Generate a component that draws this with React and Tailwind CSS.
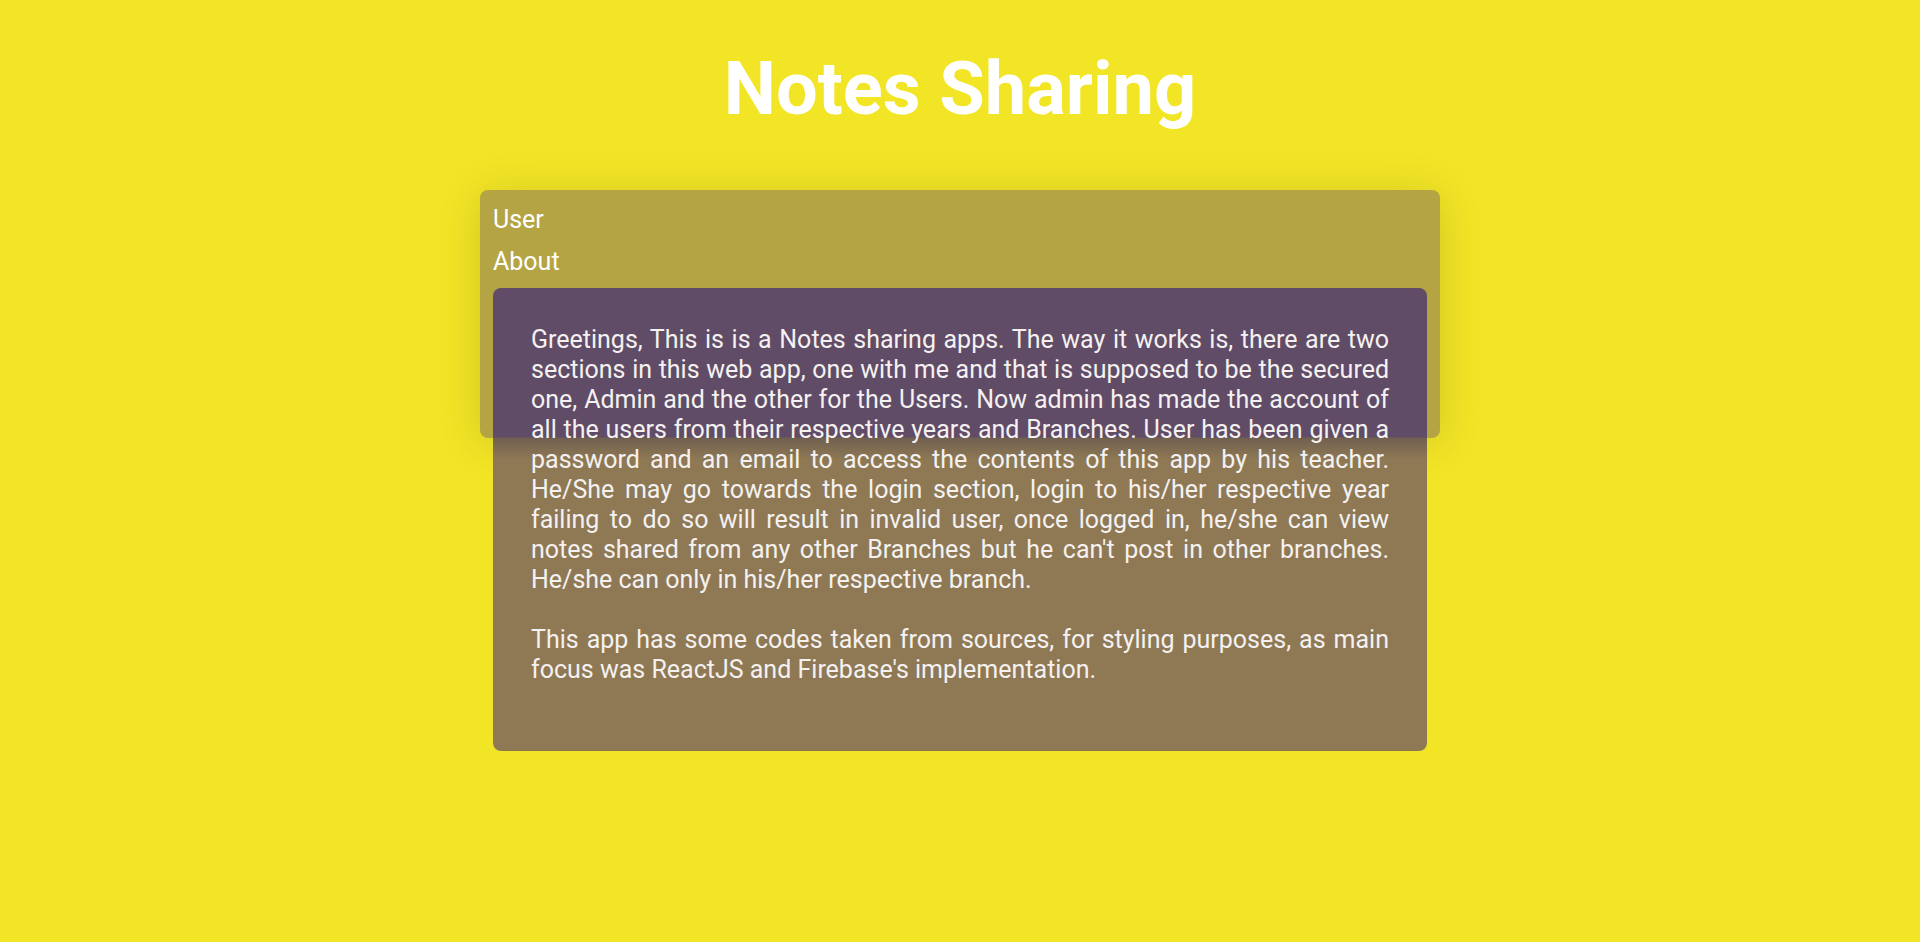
const LINKS = ["User", "About"];

export default function App() {
  return (
    <div className="min-h-screen bg-[#f2e526] font-['Roboto','Liberation_Sans',sans-serif] text-white">
      <h1 className="pt-[52px] text-center text-[74px] font-bold leading-none">
        Notes Sharing
      </h1>

      <div className="mx-auto mt-[64px] h-[248px] w-1/2 rounded-lg bg-[#b4a443] px-[13px] pt-[9px] shadow-[0_4px_44px_rgba(0,0,0,0.14)]">
        <nav className="flex flex-col">
          {LINKS.map((l) => (
            <a key={l} href="#" className="text-[25px] leading-[42px]">
              {l}
            </a>
          ))}
        </nav>

        <div className="relative mt-[5px] rounded-lg bg-[linear-gradient(to_bottom,#604c66_149px,#716050_150px,#8e7954_172px)] px-[38px] pt-[37px] pb-[66px] text-justify text-[25px] leading-[30px] text-[#f5f1f1]">
          <p>
            Greetings, This is is a Notes sharing apps. The way it works is, there are two
            sections in this web app, one with me and that is supposed to be the secured one,
            Admin and the other for the Users. Now admin has made the account of all the users
            from their respective years and Branches. User has been given a password and an
            email to access the contents of this app by his teacher. He/She may go towards the
            login section, login to his/her respective year failing to do so will result in
            invalid user, once logged in, he/she can view notes shared from any other Branches
            but he can't post in other branches. He/she can only in his/her respective branch.
            <br />
            <br />
            This app has some codes taken from sources, for styling purposes, as main focus was
            ReactJS and Firebase's implementation.
          </p>
        </div>
      </div>
    </div>
  );
}
